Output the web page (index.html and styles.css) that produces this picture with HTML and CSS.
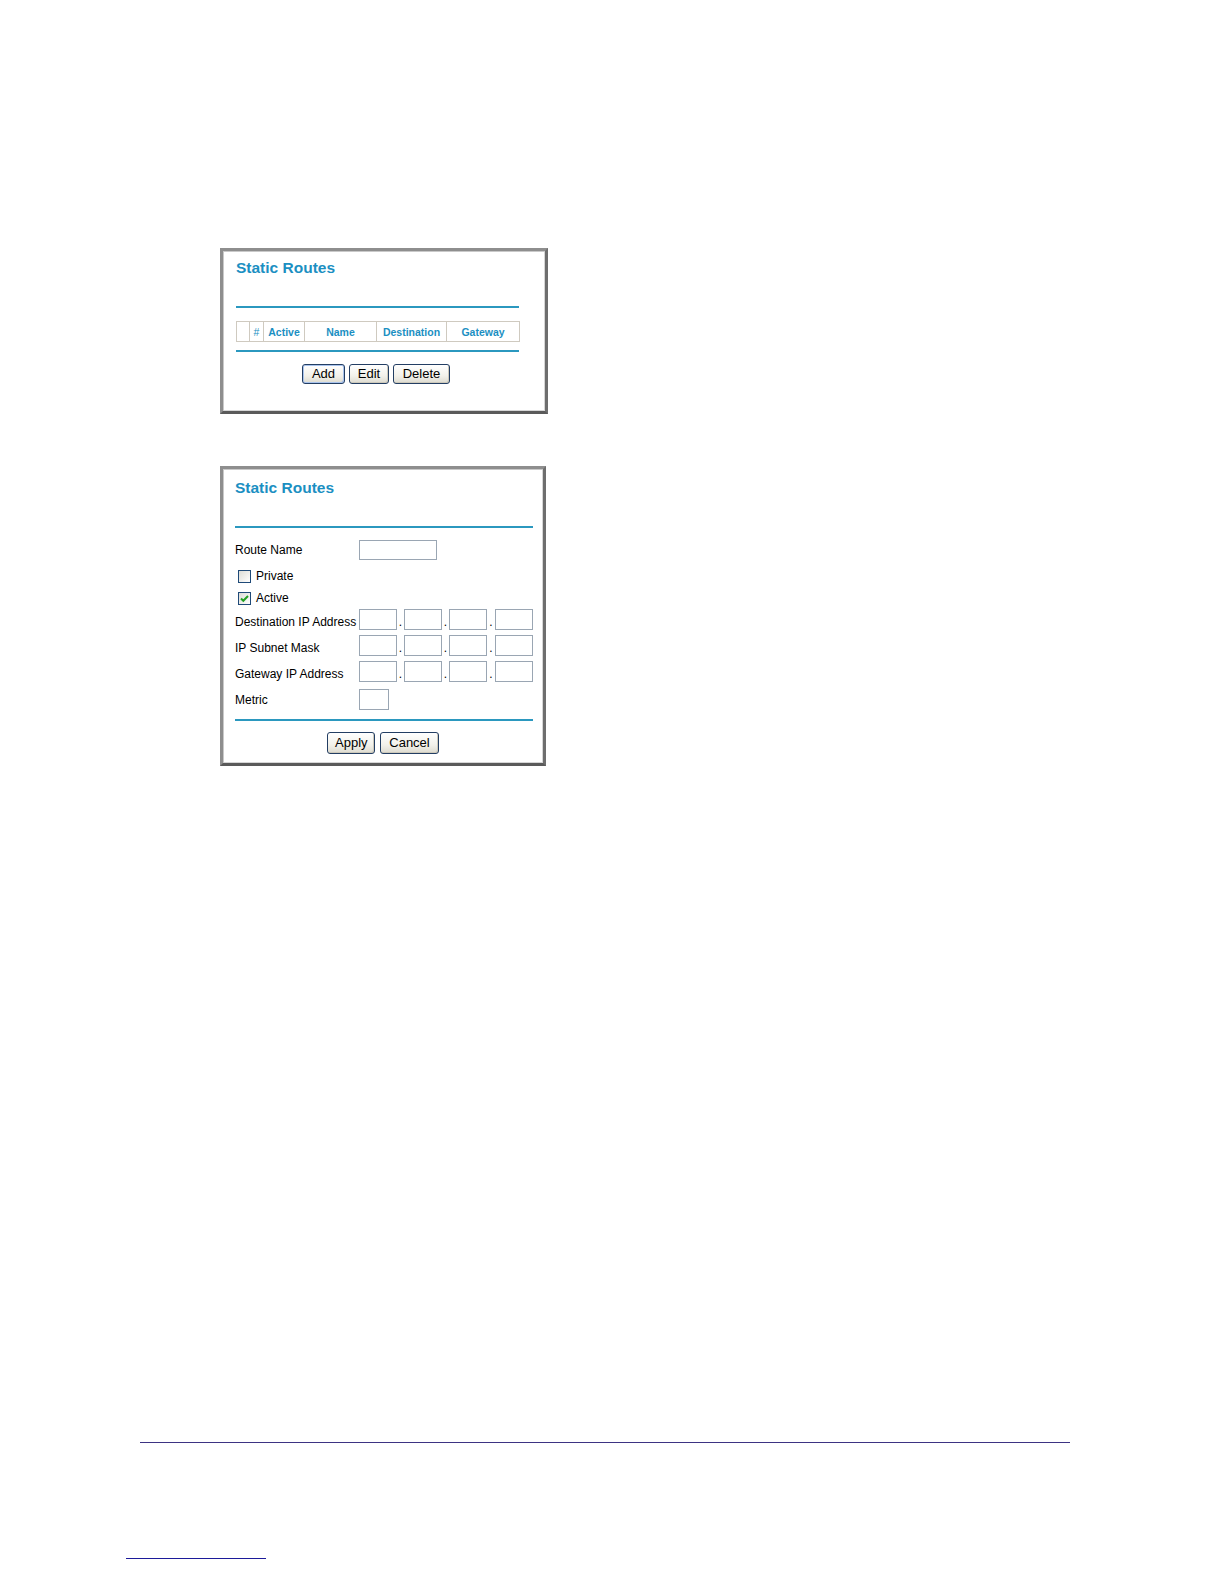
FILE: index.html
```html
<!DOCTYPE html>
<html>
<head>
<meta charset="utf-8">
<title>Static Routes</title>
<link rel="stylesheet" href="styles.css">
</head>
<body>
<div class="page">
  <section class="panel panel-list">
    <h1 class="title">Static Routes</h1>
    <div class="rule rule-top"></div>
    <table class="routes">
      <tr>
        <th class="c-sel"></th>
        <th class="c-num">#</th>
        <th class="c-act">Active</th>
        <th class="c-name">Name</th>
        <th class="c-dest">Destination</th>
        <th class="c-gw">Gateway</th>
      </tr>
    </table>
    <div class="rule rule-bottom"></div>
    <div class="buttons buttons-list">
      <button class="btn btn-focus">Add</button>
      <button class="btn">Edit</button>
      <button class="btn">Delete</button>
    </div>
  </section>

  <section class="panel panel-form">
    <h1 class="title">Static Routes</h1>
    <div class="rule rule-form"></div>
    <div class="form">
      <div class="row row-name">
        <span class="label">Route Name</span>
        <span class="field field-name"></span>
      </div>
      <div class="row row-check">
        <span class="check"></span>
        <span class="check-label">Private</span>
      </div>
      <div class="row row-check">
        <span class="check checked"><svg viewBox="0 0 13 13" width="13" height="13"><path d="M3 6.5 L5.3 8.8 L10 4" fill="none" stroke="#21a121" stroke-width="2"/></svg></span>
        <span class="check-label">Active</span>
      </div>
      <div class="row row-ip row-first">
        <span class="label">Destination IP Address</span>
        <span class="ip"><span class="field"></span><span class="dot">.</span><span class="field"></span><span class="dot">.</span><span class="field"></span><span class="dot">.</span><span class="field"></span></span>
      </div>
      <div class="row row-ip">
        <span class="label">IP Subnet Mask</span>
        <span class="ip"><span class="field"></span><span class="dot">.</span><span class="field"></span><span class="dot">.</span><span class="field"></span><span class="dot">.</span><span class="field"></span></span>
      </div>
      <div class="row row-ip">
        <span class="label">Gateway IP Address</span>
        <span class="ip"><span class="field"></span><span class="dot">.</span><span class="field"></span><span class="dot">.</span><span class="field"></span><span class="dot">.</span><span class="field"></span></span>
      </div>
      <div class="row row-ip">
        <span class="label">Metric</span>
        <span class="field field-metric"></span>
      </div>
    </div>
    <div class="rule rule-form2"></div>
    <div class="buttons buttons-form">
      <button class="btn">Apply</button>
      <button class="btn">Cancel</button>
    </div>
  </section>

  <div class="footer-rule"></div>
  <div class="bottom-rule"></div>
</div>
</body>
</html>
```

FILE: styles.css
```css
* { box-sizing: border-box; }
html, body { margin: 0; padding: 0; background: #ffffff; }
body { font-family: "Liberation Sans", Arial, sans-serif; color: #000; }

.page {
  width: 1224px;
  height: 1584px;
  padding-top: 248px;
  position: relative;
}

.panel {
  margin-left: 220px;
  background: #fff;
  border: 3px solid #8e8e8e;
  border-right-color: #6e6e6e;
  border-bottom-color: #5a5a5a;
  box-shadow: inset 1px 1px 0 #c9c9c9, inset -1px -1px 0 #d6d6d6;
}

.panel-list { width: 328px; height: 166px; padding: 8px 0 0 13px; }
.panel-form { width: 326px; height: 300px; margin-top: 52px; padding: 10px 0 0 12px; }

.title {
  margin: 0;
  font-size: 15.5px;
  line-height: 18px;
  font-weight: bold;
  color: #1b8fc2;
}

.rule { height: 2px; background: #2b98bf; }
.rule-top { width: 283px; margin-top: 29px; }
.rule-bottom { width: 283px; margin-top: 8px; }
.rule-form { width: 298px; margin-top: 29px; }
.rule-form2 { width: 298px; margin-top: 9px; }

.routes {
  margin-top: 13px;
  width: 283px;
  height: 21px;
  border-collapse: collapse;
  table-layout: fixed;
}
.routes th {
  border: 1px solid #cfcac0;
  padding: 0;
  font-size: 10.5px;
  font-weight: bold;
  color: #1b8fc2;
  text-align: center;
  white-space: nowrap;
  height: 20px;
}
.c-sel { width: 13px; }
.c-num { width: 14px; font-weight: normal !important; }
.c-act { width: 41px; }
.c-name { width: 72px; }
.c-dest { width: 70px; }
.c-gw { width: 73px; }

.buttons { display: flex; gap: 4px; }
.buttons-list { margin-top: 12px; padding-left: 66px; }
.buttons-form { margin-top: 11px; padding-left: 92px; gap: 5px; }

.btn {
  font-family: "Liberation Sans", Arial, sans-serif;
  font-size: 13px;
  line-height: 18px;
  height: 21px;
  padding: 0 7px;
  color: #000;
  border: 1px solid #233e63;
  border-radius: 3px;
  background: linear-gradient(#ffffff, #f2f1ea 60%, #dddbd0);
  box-shadow: inset -1px -1px 0 #cdc9bb;
}
.buttons-list .btn { height: 20px; }
.buttons-list .btn:nth-child(1) { width: 43px; }
.buttons-list .btn:nth-child(2) { width: 40px; }
.buttons-list .btn:nth-child(3) { width: 57px; }
.buttons-form .btn { height: 22px; }
.buttons-form .btn:nth-child(1) { width: 48px; }
.buttons-form .btn:nth-child(2) { width: 59px; }
.btn-focus { box-shadow: inset 0 0 0 1px #a9c3ec, inset -1px -1px 0 #8fb0e3; }

.form { font-size: 12px; margin-top: 12px; }
.row { display: flex; align-items: center; }
.label { width: 124px; white-space: nowrap; }
.row-name { height: 20px; }
.row-check { height: 22px; padding-left: 3px; }
.row-check:nth-child(2) { margin-top: 5px; }
.row-ip { height: 21px; margin-top: 5px; }
.row-first { margin-top: 2px; }

.field {
  display: inline-block;
  height: 21px;
  width: 38px;
  border: 1px solid #9aa6b3;
  background: #fff;
}
.field-name { width: 78px; height: 20px; }
.field-metric { width: 30px; }

.ip { display: flex; align-items: stretch; }
.dot {
  width: 7px;
  text-align: center;
  font-size: 12px;
  line-height: 26px;
}
.ip .dot:nth-child(6) { width: 8px; }

.check {
  display: inline-block;
  width: 13px;
  height: 13px;
  border: 1px solid #1f4a78;
  background: linear-gradient(135deg, #dcdcd6, #ffffff);
  margin-right: 5px;
  position: relative;
}
.check svg { position: absolute; left: -1px; top: -1px; }

.footer-rule {
  position: absolute;
  left: 140px;
  top: 1442px;
  width: 930px;
  height: 1px;
  background: #3d3383;
}
.bottom-rule {
  position: absolute;
  left: 126px;
  top: 1558px;
  width: 140px;
  height: 1px;
  background: #1c1a9a;
}
```
